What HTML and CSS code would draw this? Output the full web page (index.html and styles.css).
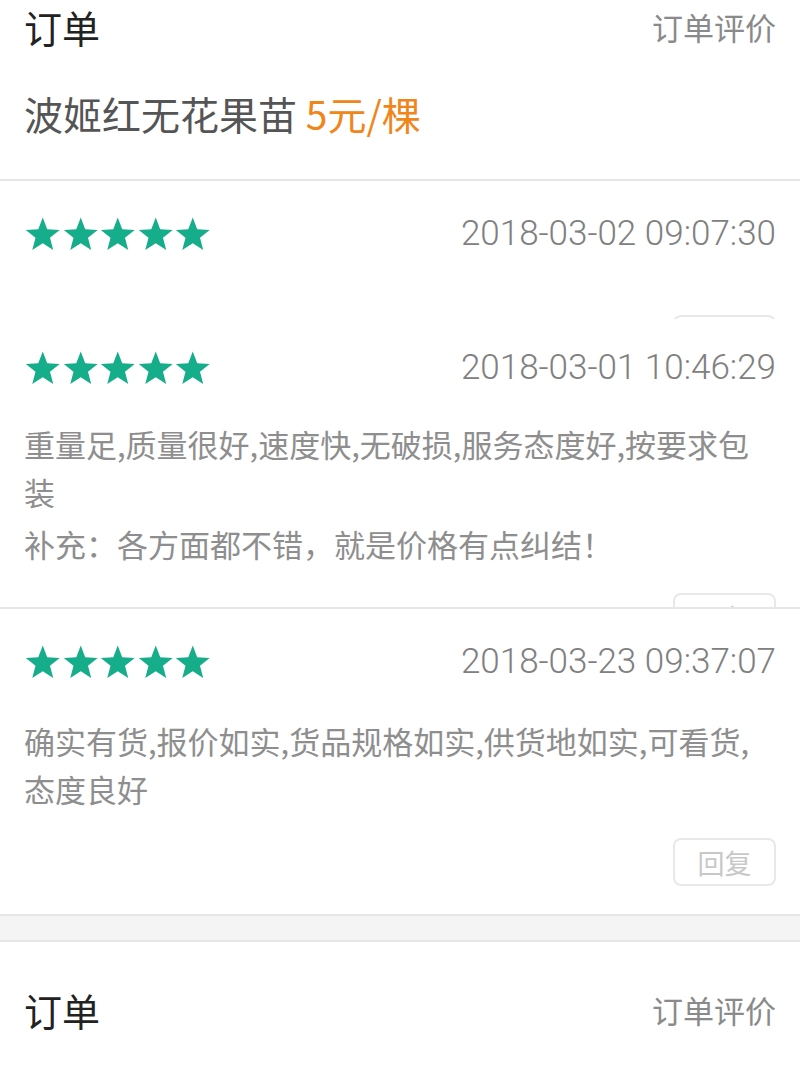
FILE: index.html
```html
<!DOCTYPE html>
<html lang="zh-CN">
<head>
<meta charset="utf-8">
<title>订单评价</title>
<link rel="stylesheet" href="styles.css">
</head>
<body>
<svg width="0" height="0" class="defs">
  <defs>
    <symbol id="star" viewBox="0 0 24 24">
      <polygon points="12,1 14.9,8.6 23,9 16.7,14.1 18.8,22 12,17.6 5.2,22 7.3,14.1 1,9 9.1,8.6"/>
    </symbol>
  </defs>
</svg>

<section class="order order--scrolled">
  <div class="order-head">
    <span class="order-title">订单</span>
    <span class="order-link">订单评价</span>
  </div>
  <div class="product">波姬红无花果苗 <span class="price">5元/棵</span></div>
</section>

<div class="review review--clip1">
  <div class="review-head">
    <div class="stars">
      <svg class="star"><use href="#star"/></svg><svg class="star"><use href="#star"/></svg><svg class="star"><use href="#star"/></svg><svg class="star"><use href="#star"/></svg><svg class="star"><use href="#star"/></svg>
    </div>
    <span class="date">2018-03-02 09:07:30</span>
  </div>
  <div class="review-body review-body--empty"></div>
  <div class="actions"><button class="reply">回复</button></div>
</div>

<div class="review review--clip2">
  <div class="review-head">
    <div class="stars">
      <svg class="star"><use href="#star"/></svg><svg class="star"><use href="#star"/></svg><svg class="star"><use href="#star"/></svg><svg class="star"><use href="#star"/></svg><svg class="star"><use href="#star"/></svg>
    </div>
    <span class="date">2018-03-01 10:46:29</span>
  </div>
  <div class="review-body review-body--tight">
    <p>重量足,质量很好,速度快,无破损,服务态度好,按要求包装</p>
    <p class="extra">补充：各方面都不错，就是价格有点纠结！</p>
  </div>
  <div class="actions"><button class="reply">回复</button></div>
</div>

<div class="review">
  <div class="review-head">
    <div class="stars">
      <svg class="star"><use href="#star"/></svg><svg class="star"><use href="#star"/></svg><svg class="star"><use href="#star"/></svg><svg class="star"><use href="#star"/></svg><svg class="star"><use href="#star"/></svg>
    </div>
    <span class="date">2018-03-23 09:37:07</span>
  </div>
  <div class="review-body">
    <p>确实有货,报价如实,货品规格如实,供货地如实,可看货,态度良好</p>
  </div>
  <div class="actions"><button class="reply">回复</button></div>
</div>

<div class="gap"></div>

<section class="order">
  <div class="order-head">
    <span class="order-title">订单</span>
    <span class="order-link">订单评价</span>
  </div>
  <div class="product">波姬红无花果苗 <span class="price">5元/棵</span></div>
</section>
</body>
</html>
```

FILE: styles.css
```css
html, body {
  margin: 0;
  padding: 0;
  background: #ffffff;
}
body {
  font-family: "Noto Sans CJK SC", "Noto Sans", sans-serif;
  width: 800px;
  overflow: hidden;
}
.defs {
  position: absolute;
  width: 0;
  height: 0;
}

.order {
  padding: 48px 24px 46px;
  border-bottom: 2px solid #e6e6e6;
}
.order--scrolled {
  padding-top: 7px;
}
.order-head {
  display: flex;
  justify-content: space-between;
  align-items: center;
  height: 40px;
}
.order-title {
  font-size: 38px;
  color: #222222;
  line-height: 40px;
}
.order-link {
  font-size: 31px;
  color: #8a8a8a;
  line-height: 40px;
}
.product {
  margin-top: 46px;
  font-size: 39px;
  line-height: 40px;
  color: #555555;
}
.price {
  color: #f0861a;
}

.review {
  padding: 35px 24px 28px;
  border-bottom: 2px solid #e6e6e6;
}
.review--clip1 {
  height: 103px;
  padding-bottom: 0;
  overflow: hidden;
  border-bottom: none;
}
.review--clip2 {
  height: 257px;
  padding-top: 31px;
  padding-bottom: 0;
  overflow: hidden;
}
.review-head {
  display: flex;
  justify-content: space-between;
  align-items: center;
  height: 36px;
}
.stars {
  display: flex;
}
.star {
  width: 37.5px;
  height: 37px;
  fill: #16ad8a;
}
.date {
  font-family: Roboto, "Noto Sans", sans-serif;
  font-weight: 300;
  font-size: 35px;
  color: #808080;
  line-height: 36px;
}
.review-body {
  margin-top: 37px;
  font-size: 31px;
  line-height: 48px;
  color: #8e8e8e;
}
.review-body--tight {
  margin-top: 34px;
}
.review-body--empty {
  margin-top: 0;
  height: 38px;
}
.review-body p {
  margin: 0;
}
.review-body .extra {
  margin-top: 4px;
}
.actions {
  display: flex;
  justify-content: flex-end;
  margin-top: 25px;
}
.reply {
  width: 103px;
  height: 48px;
  border: 2px solid #e8e8e8;
  border-radius: 8px;
  background: #ffffff;
  color: #c8c8c8;
  font-family: "Noto Sans CJK SC", sans-serif;
  font-size: 27px;
  padding: 0;
}

.gap {
  height: 24px;
  background: #f4f4f4;
  border-bottom: 2px solid #e6e6e6;
}
```
